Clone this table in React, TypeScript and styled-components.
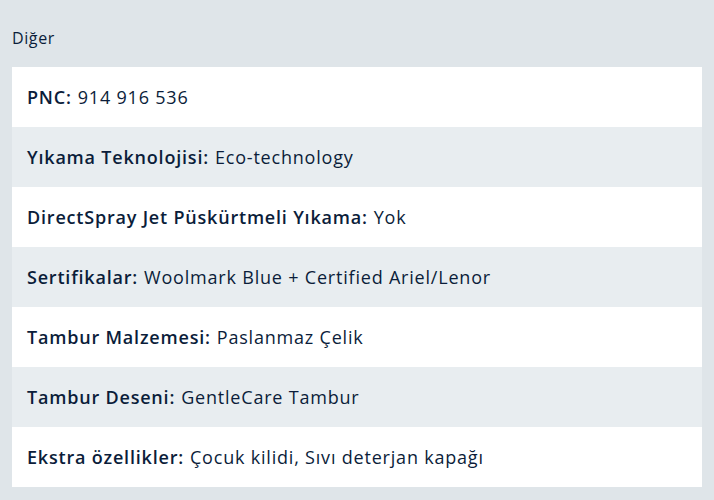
import React from 'react';
import styled, { createGlobalStyle } from 'styled-components';

const GlobalStyle = createGlobalStyle`
    body {
        margin: 0;
        background: #dfe5e9;
        font-family: "Open Sans", "Noto Sans", sans-serif;
        color: #0b1d3a;
    }
`;

const Wrapper = styled.section`
    padding: 28px 12px 13px 12px;
`;

const Heading = styled.h3`
    margin: 0 0 18px 0;
    font-size: 16px;
    font-weight: 400;
    line-height: 21px;
    letter-spacing: 0.6px;
`;

const List = styled.dl`
    margin: 0;
    display: flex;
    flex-direction: column;
`;

interface RowProps {
    $shaded?: boolean;
}

const Row = styled.div<RowProps>`
    height: 60px;
    display: flex;
    align-items: center;
    padding: 0 15px;
    background: ${props => (props.$shaded ? '#e8edf0' : '#ffffff')};
    font-size: 18px;
    letter-spacing: 0.8px;
`;

const Label = styled.dt`
    font-weight: 600;
    margin-right: 6px;
`;

const Value = styled.dd`
    margin: 0;
    font-weight: 400;
`;

const specs = [
    ['PNC', '914 916 536'],
    ['Yıkama Teknolojisi', 'Eco-technology'],
    ['DirectSpray Jet Püskürtmeli Yıkama', 'Yok'],
    ['Sertifikalar', 'Woolmark Blue + Certified Ariel/Lenor'],
    ['Tambur Malzemesi', 'Paslanmaz Çelik'],
    ['Tambur Deseni', 'GentleCare Tambur'],
    ['Ekstra özellikler', 'Çocuk kilidi, Sıvı deterjan kapağı'],
];

export default function App(): JSX.Element {
    return (
        <>
            <GlobalStyle />
            <Wrapper>
                <Heading>Diğer</Heading>
                <List>
                    {specs.map(([label, value], i) => (
                        <Row key={label} $shaded={i % 2 === 1}>
                            <Label>{label}:</Label>
                            <Value>{value}</Value>
                        </Row>
                    ))}
                </List>
            </Wrapper>
        </>
    );
}
